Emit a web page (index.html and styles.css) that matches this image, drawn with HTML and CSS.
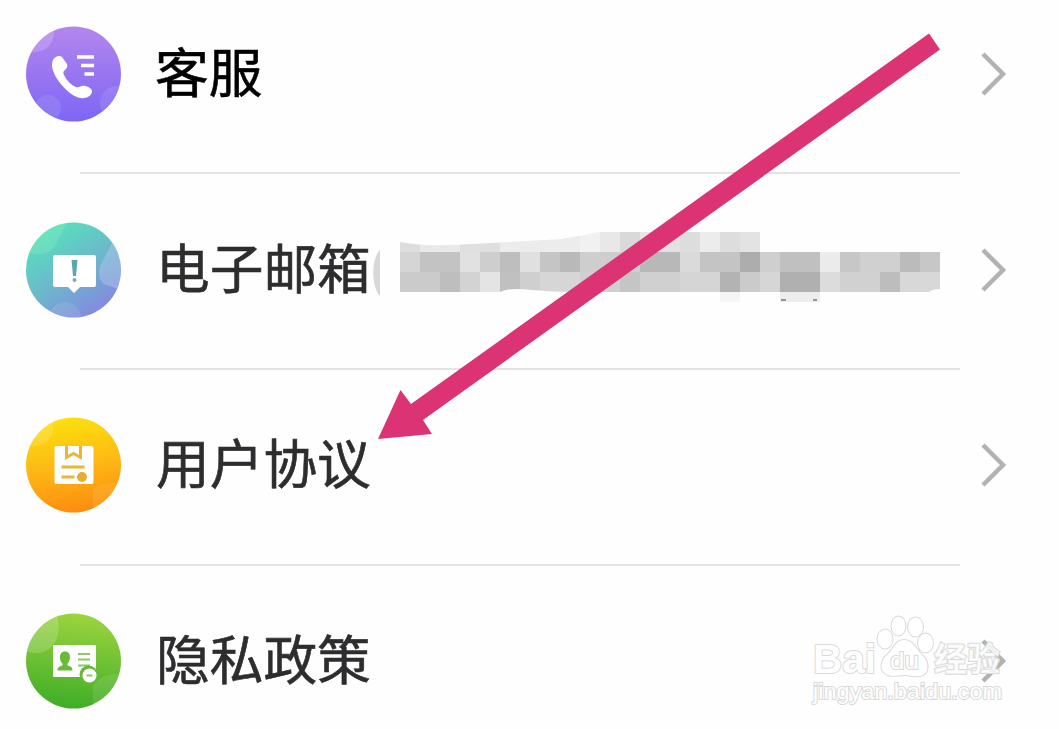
FILE: index.html
```html
<!DOCTYPE html>
<html lang="zh-CN">
<head>
    <meta charset="UTF-8">
    <meta name="viewport" content="width=device-width, initial-scale=1.0">
    <title>设置</title>
    <link rel="stylesheet" href="styles.css">
</head>
<body>
    <div class="page">
        <ul class="menu">
            <li class="menu-item">
                <svg class="icon" viewBox="0 0 96 96">
                    <defs>
                        <linearGradient id="purple" x1="0" y1="0" x2="0" y2="1">
                            <stop offset="0" stop-color="#b486ed"/>
                            <stop offset="1" stop-color="#7d66f5"/>
                        </linearGradient>
                        <clipPath id="round"><circle cx="48.500" cy="48" r="47.5"/></clipPath>
                    </defs>
                    <g clip-path="url(#round)">
                        <rect width="96" height="96" fill="url(#purple)"/>
                        <circle cx="10" cy="7" r="19" fill="#fff" opacity=".18"/>
                        <circle cx="23" cy="82" r="13" fill="#fff" opacity=".1"/>
                        <circle cx="92" cy="77" r="17" fill="#fff" opacity=".1"/>
                    </g>
                    <path d="M28 34c2-4 7-5 9-3l5 7c1 2 0 4-2 6-2 1-2 3-1 5 3 6 7 10 12 12 3 1 4-1 6-1 3-1 10 2 10 5 0 4-4 7-8 7-5 1-10-2-14-5-9-7-17-18-18-27 0-2 0-4 1-6z" fill="#fff"/>
                    <path d="M52 31h17M56 39.500h13M59.500 48H69" stroke="#fff" stroke-width="3.500" fill="none"/>
                </svg>
                <span class="label label-first">客服</span>
                <svg class="chevron" viewBox="0 0 28 46"><path d="M3 3l20 20L3 43"/></svg>
            </li>
            <li class="menu-item">
                <svg class="icon" viewBox="0 0 96 96">
                    <defs>
                        <linearGradient id="teal" x1=".2" y1=".1" x2=".75" y2=".95">
                            <stop offset="0" stop-color="#58e0bd"/>
                            <stop offset=".5" stop-color="#6bb9cb"/>
                            <stop offset="1" stop-color="#8489e0"/>
                        </linearGradient>
                    </defs>
                    <g clip-path="url(#round)">
                        <rect width="96" height="96" fill="url(#teal)"/>
                        <path d="M0 0h42L29 26Q20 36 0 30z" fill="#9ff5bd" opacity=".25"/>
                        <path d="M88 19L75 44q-3 12 4 18l17 6V19z" fill="#cfd6f5" opacity=".32"/>
                        <circle cx="40" cy="96" r="16" fill="#fff" opacity=".1"/>
                    </g>
                    <path d="M30 33h39q2 0 2 2v28q0 2-2 2H55l-6 6-6-6H30q-2 0-2-2V35q0-2 2-2z" fill="#fff"/>
                    <path d="M46.500 38h6l-1.500 16h-3z" fill="#5aa6b5"/>
                    <circle cx="49.500" cy="58" r="2" fill="#6faec4"/>
                </svg>
                <span class="label label-mail">电子邮箱</span>
                <svg class="masked" viewBox="0 0 568 70">
                    <path d="M8 18v46C-1 55-1 26 8 18z" fill="#d8d8d8"/>
                    <clipPath id="blur-edge">
                        <path d="M28 10Q50 15 100 12L190 7 228 0H388V20H568V57Q560 57 557 60H448V70H408V60H368V70H348V60H200Q180 60 160 58 138 55 128 60H28z"/>
                    </clipPath>
                    <g clip-path="url(#blur-edge)" id="mosaic"></g>
                    <path d="M409 68h5M441 68h4" stroke="#777" stroke-width="1.500"/>
                </svg>
                <svg class="chevron" viewBox="0 0 28 46"><path d="M3 3l20 20L3 43"/></svg>
            </li>
            <li class="menu-item">
                <svg class="icon" viewBox="0 0 96 96">
                    <defs>
                        <linearGradient id="orange" x1=".4" y1="0" x2=".55" y2="1">
                            <stop offset="0" stop-color="#fce10c"/>
                            <stop offset=".5" stop-color="#fdb915"/>
                            <stop offset="1" stop-color="#fd8b10"/>
                        </linearGradient>
                    </defs>
                    <g clip-path="url(#round)">
                        <rect width="96" height="96" fill="url(#orange)"/>
                        <circle cx="10" cy="11" r="18" fill="#fff" opacity=".14"/>
                        <path d="M68 72q15-9 28-5v29H68z" fill="#ffd36b" opacity=".2"/>
                    </g>
                    <rect x="29.500" y="29" width="39" height="38" rx="2" fill="#fff"/>
                    <path d="M41.500 29v11.500l7-4 7 4V29" fill="none" stroke="#e9b637" stroke-width="3"/>
                    <path d="M36.500 50h23M36.500 60h13" stroke="#e9b637" stroke-width="3"/>
                    <circle cx="57" cy="60" r="5" fill="#e8ac35"/>
                </svg>
                <span class="label">用户协议</span>
                <svg class="chevron" viewBox="0 0 28 46"><path d="M3 3l20 20L3 43"/></svg>
            </li>
            <li class="menu-item">
                <svg class="icon" viewBox="0 0 96 96">
                    <defs>
                        <linearGradient id="green" x1=".55" y1="0" x2=".45" y2="1">
                            <stop offset="0" stop-color="#9dd43f"/>
                            <stop offset="1" stop-color="#3ead27"/>
                        </linearGradient>
                    </defs>
                    <g clip-path="url(#round)">
                        <rect width="96" height="96" fill="url(#green)"/>
                        <path d="M0 0h32q6 25-8 36-10 7-24 2z" fill="#fff" opacity=".18"/>
                        <path d="M68 72q12-14 28-10v34H68z" fill="#fff" opacity=".1"/>
                    </g>
                    <rect x="28" y="32" width="43" height="32" rx="1" fill="#fff"/>
                    <path d="M40 38.500c7 0 5.500 10 2.500 12v2c3 1 5 1 5 5h-15c0-4 2-4 5-5v-2c-3-2-4.500-12 2.500-12z" fill="#69bb35"/>
                    <path d="M53 41h12M53 46.500h12M53 52.500h12" stroke="#8cc968" stroke-width="2"/>
                    <circle cx="63.500" cy="61.500" r="9" fill="#66b83a"/>
                    <circle cx="64.500" cy="62.500" r="7" fill="#fff"/>
                    <path d="M61.500 62.500h6" stroke="#8cc968" stroke-width="2"/>
                </svg>
                <span class="label">隐私政策</span>
                <svg class="chevron" viewBox="0 0 28 46"><path d="M3 3l20 20L3 43"/></svg>
            </li>
        </ul>

        <svg class="watermark" viewBox="0 0 200 98">
            <text class="wm-latin" x="1" y="62" textLength="63" lengthAdjust="spacingAndGlyphs">Bai</text>
            <g class="wm-paw">
                <ellipse cx="73" cy="28" rx="7.500" ry="9.500"/>
                <ellipse cx="86.500" cy="15" rx="7" ry="9.500"/>
                <ellipse cx="103.500" cy="16" rx="7.500" ry="9.500"/>
                <ellipse cx="113.500" cy="32" rx="7.500" ry="9.500"/>
                <path d="M92 29c10 0 12 10 19 16 6 6 7 18-3 20-6 1-10-1-16-1s-11 2-16 0c-10-4-7-15-1-20 7-6 8-15 17-15z"/>
            </g>
            <text class="wm-du" x="78" y="58" textLength="29" lengthAdjust="spacingAndGlyphs">du</text>
            <text class="wm-cjk" x="122" y="60" textLength="66">经验</text>
            <text class="wm-url" x="1" y="88" textLength="189" lengthAdjust="spacingAndGlyphs">jingyan.baidu.com</text>
        </svg>

        <svg class="arrow" viewBox="0 0 1059 729">
            <path d="M929 33.500L940 49.500L423 420L432 434L378 439L400.500 390L411 404Z"/>
        </svg>
    </div>
    <script>
        // [y, height, [[x, width, grey], ...]]
        const rows = [
            [0, 20, [[28, 20, 221], [48, 40, 233], [88, 40, 223], [128, 80, 236], [208, 20, 241], [228, 20, 232], [248, 20, 217], [268, 20, 230], [288, 20, 225], [308, 20, 221], [328, 20, 236], [348, 20, 221], [368, 20, 227]]],
            [20, 20, [[28, 20, 213], [48, 40, 195], [88, 20, 225], [108, 20, 206], [128, 20, 190], [148, 20, 224], [168, 20, 197], [188, 20, 185], [208, 60, 206], [268, 40, 184], [308, 20, 218], [328, 40, 196], [368, 20, 173], [388, 20, 207], [408, 40, 192], [448, 20, 235], [468, 20, 199], [488, 40, 208], [528, 20, 187], [548, 20, 199]]],
            [40, 20, [[28, 40, 203], [68, 20, 190], [88, 20, 211], [108, 20, 228], [128, 20, 192], [148, 20, 207], [168, 40, 214], [208, 40, 207], [248, 20, 197], [268, 40, 208], [308, 40, 213], [348, 20, 179], [368, 20, 203], [388, 20, 214], [408, 40, 176], [448, 20, 220], [468, 40, 209], [508, 20, 189], [528, 40, 216]]],
            [60, 10, [[348, 20, 245], [408, 40, 237]]]
        ];
        const mosaic = document.getElementById("mosaic");
        for (const [y, height, cells] of rows) {
            for (const [x, width, grey] of cells) {
                const rect = document.createElementNS("http://www.w3.org/2000/svg", "rect");
                rect.setAttribute("x", x);
                rect.setAttribute("y", y);
                rect.setAttribute("width", width);
                rect.setAttribute("height", height);
                rect.setAttribute("fill", `rgb(${grey}, ${grey}, ${grey})`);
                mosaic.appendChild(rect);
            }
        }
    </script>
</body>
</html>
```
FILE: styles.css
```css
body {
    margin: 0;
    background-color: #fefefe;
    color: #2d2d2f;
    font-family: "Noto Sans CJK SC", sans-serif;
}
.page {
    position: relative;
    width: 1059px;
    height: 729px;
    overflow: hidden;
}
.menu {
    list-style: none;
    margin: -21.500px 0 0;
    padding: 0;
}
.menu-item {
    display: flex;
    align-items: center;
    box-sizing: border-box;
    height: 195.700px;
    padding: 0 51px 4.500px 25px;
    background: linear-gradient(#e2e4e4, #e2e4e4) no-repeat 80px 100% / 880px 2px;
}
.menu-item:last-child {
    background: none;
}
.icon {
    width: 96px;
    height: 96px;
    flex: none;
}
.label {
    margin-left: 35px;
    padding-bottom: 8px;
    font-size: 53.700px;
    line-height: 80px;
    white-space: nowrap;
    -webkit-text-stroke: .6px currentColor;
}
.label-first {
    margin-left: 34px;
    color: #000;
}
.label-mail {
    width: 215px;
}
.masked {
    width: 568px;
    height: 70px;
    margin: -6px -51px 0 1px;
    flex: none;
}
.chevron {
    width: 28px;
    height: 46px;
    margin-left: auto;
    flex: none;
}
.chevron path {
    fill: none;
    stroke: #b2b2b2;
    stroke-width: 4.500;
}

/* 右下角水印 */
.watermark {
    position: absolute;
    left: 812px;
    top: 611px;
    width: 200px;
    height: 98px;
    overflow: visible;
}
.watermark text,
.wm-paw {
    fill: #fff;
    stroke: #dadada;
    stroke-width: 2;
    paint-order: stroke;
}
.wm-latin,
.wm-du {
    font-family: "Liberation Sans", sans-serif;
    font-weight: bold;
    font-size: 41px;
}
.watermark .wm-du {
    font-size: 24px;
    font-weight: normal;
}
.watermark .wm-cjk {
    font-size: 33px;
    font-weight: bold;
    fill-opacity: .8;
}
.wm-url {
    font-family: "Liberation Sans", sans-serif;
    font-size: 22px;
}

/* 指向"用户协议"的箭头 */
.arrow {
    position: absolute;
    left: 0;
    top: 0;
    width: 1059px;
    height: 729px;
}
.arrow path {
    fill: #dc3374;
}
```
